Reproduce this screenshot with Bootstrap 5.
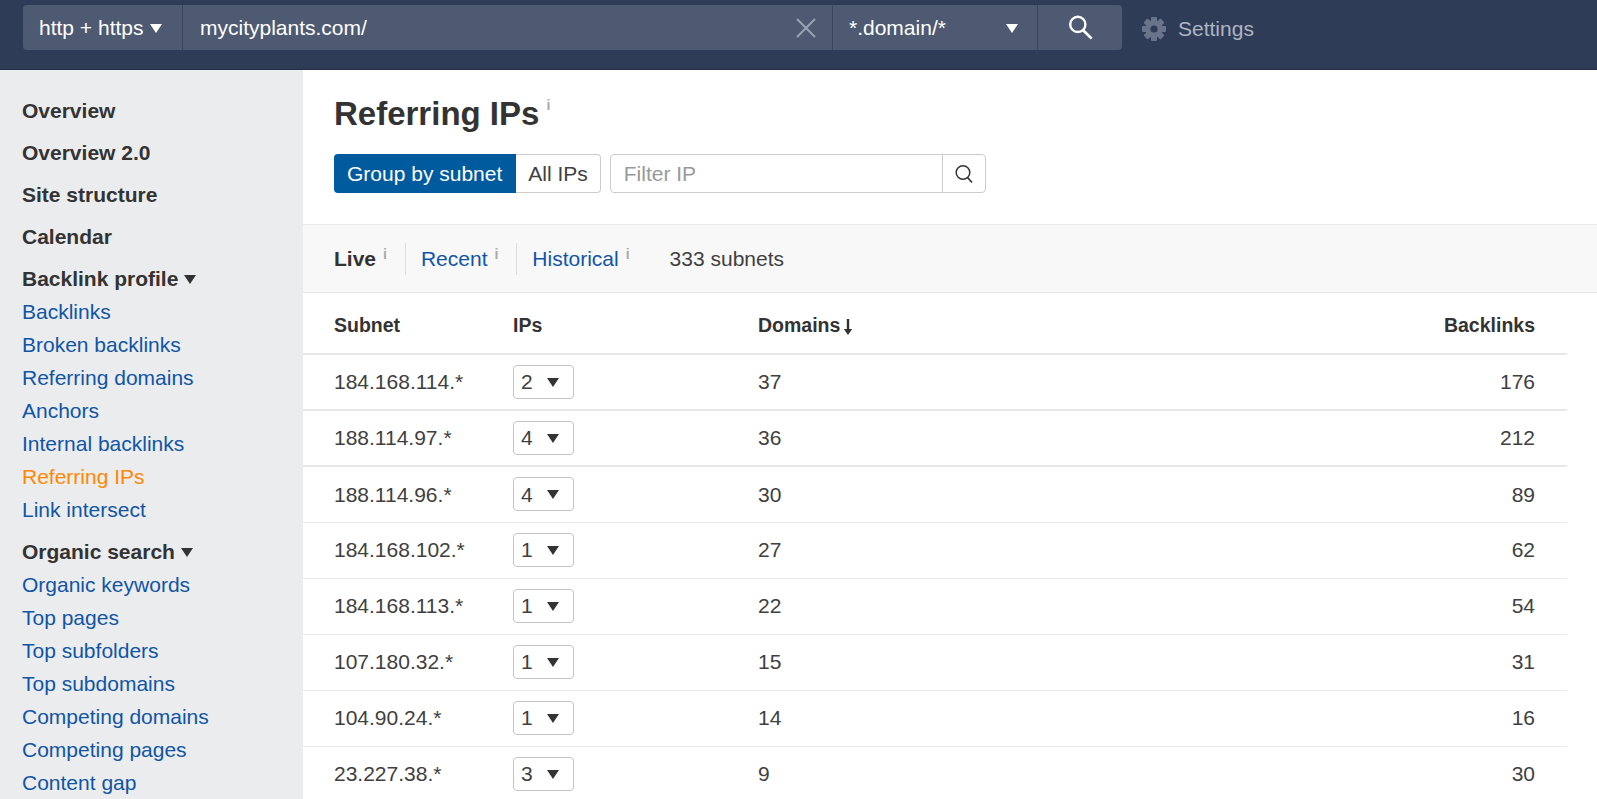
<!DOCTYPE html>
<html lang="en"><head><meta charset="utf-8"><title>Referring IPs</title>
<link rel="stylesheet" href="https://cdn.jsdelivr.net/npm/bootstrap@5.3.0/dist/css/bootstrap.min.css">
<style>
html,body{height:100%;overflow:hidden}
body{font-family:"Liberation Sans",Arial,sans-serif;font-size:21px;color:#404040;background:#fff}
a{text-decoration:none;color:#1155a5}
.topbar{height:70px;background:#2e3c58;border-bottom:1px solid #222e45;padding:5px 0 0 23px}
.searchbar{height:45px;width:1099px;background:#4e5a72;border-radius:4px;color:#fff}
.seg{height:100%;border-right:1px solid #39465f;padding:1px 16px 0;white-space:nowrap}
.seg-proto{width:160px;gap:6px}
.seg-url{flex:1 1 auto;justify-content:space-between;padding-left:17px;padding-right:15px}
.seg-mode{flex:0 0 205px;justify-content:space-between;padding-right:19px}
.seg-go{flex:0 0 84px;border-right:0;justify-content:center;padding:0}
.tri{display:inline-block;width:0;height:0;border-left:6px solid transparent;border-right:6px solid transparent;border-top:9px solid currentColor}
.settings{color:#aeb4c0;margin-left:20px;gap:12px}
.mainwrap{height:calc(100% - 70px)}
.sidenav{width:303px;flex:0 0 303px;background:#ebecee;padding:20px 0 0 22px}
.nav-head{font-weight:700;height:42px;line-height:42px;display:block;color:#333}
.nav-group{height:37px;padding-top:5px;font-weight:700;color:#333;gap:6px}
.nav-item-link{display:block;height:33px;line-height:33px}
.nav-item-link.is-current{color:#f80}
.nav-list{margin-bottom:5px}
.content{flex:1 1 auto;min-width:0}
.head-area{padding:24px 30px 0 31px;height:154px}
.page-title{font-size:33px;font-weight:700;margin:0;line-height:40px;color:#333}
.info-i{font-size:14px;color:#aaa;font-weight:700;position:relative;top:-5px;line-height:1}
.title-i{top:-15px;margin-left:7px}
.tab-i{margin-left:7px}
.filter-row{margin-top:20px;height:39px}
.seg-group{height:39px}
.seg-on{background:#005a9e;color:#fff;border-radius:4px 0 0 4px;padding:0 14px 0 13px;height:39px;line-height:39px}
.seg-off{border:1px solid #ccc;border-left:0;border-radius:0 4px 4px 0;padding:0 12px;height:39px;line-height:37px;background:#fff}
.filter-box{margin-left:9px;width:376px;height:39px;border:1px solid #ccc;border-radius:4px;background:#fff}
.filter-text{flex:1 1 auto;padding-left:13px;color:#999;line-height:37px}
.filter-btn{width:43px;height:100%;border-left:1px solid #ccc}
.tabbar{height:69px;background:#f8f8f8;border-top:1px solid #ebebeb;border-bottom:1px solid #e6e6e6;padding-left:31px}
.tab-sep{width:1px;height:32px;background:#ddd;margin:0 15px 0 18px}
.tab-live{font-weight:700;color:#333}
.tab-count{margin-left:40px}
.ip-table{width:1264px;table-layout:fixed;margin:0;--bs-table-color:#404040;--bs-table-bg:transparent}
.ip-table th,.ip-table td{height:56px;padding:0;vertical-align:middle;border-bottom:1px solid #ebebeb;font-size:21px}
.ip-table th{height:61px;font-weight:700;font-size:19.5px;color:#333;padding-top:6px;border-bottom:2px solid #e8e8e8}
.ip-table tr.strong td{border-bottom:2px solid #e8e8e8}
.col-a{width:210px;padding-left:31px!important}
.col-b{width:245px}
.col-d{text-align:right;padding-right:32px!important;width:300px}
.ip-pick{width:61px;height:34px;border:1px solid #c4c4c4;border-radius:4px;padding:0 8px 0 7px;gap:14px;background:#fff}
.ip-pick .tri{color:#333}
.sort-arrow{margin-left:-3px}
</style></head>
<body>
<header class="topbar d-flex align-items-start">
  <div class="searchbar d-flex align-items-center">
    <div class="seg seg-proto d-flex align-items-center">http + https <span class="tri"></span></div>
    <div class="seg seg-url d-flex align-items-center">mycityplants.com/
      <svg width="22" height="22" viewBox="0 0 22 22" aria-hidden="true"><path d="M2 2 20 20M20 2 2 20" stroke="#9aa1af" stroke-width="2" fill="none"/></svg></div>
    <div class="seg seg-mode d-flex align-items-center">*.domain/* <span class="tri"></span></div>
    <div class="seg seg-go d-flex align-items-center">
      <svg width="25" height="25" viewBox="0 0 28 28" aria-hidden="true"><circle cx="11" cy="10.5" r="8.5" stroke="#fff" stroke-width="2.7" fill="none"/><path d="M17 17 26.5 26.5" stroke="#fff" stroke-width="3" fill="none"/></svg></div>
  </div>
  <div class="settings d-flex align-items-center h-75">
    <svg width="24" height="24" viewBox="0 0 24 24" aria-hidden="true"><g fill="#69738a"><rect x="9" y="0" width="6" height="24" rx="1"/><rect x="9" y="0" width="6" height="24" rx="1" transform="rotate(45 12 12)"/><rect x="9" y="0" width="6" height="24" rx="1" transform="rotate(90 12 12)"/><rect x="9" y="0" width="6" height="24" rx="1" transform="rotate(135 12 12)"/></g><circle cx="12" cy="12" r="6.2" fill="none" stroke="#69738a" stroke-width="5.4"/><circle cx="12" cy="12" r="3.6" fill="#2e3c58"/></svg>
    Settings</div>
</header>
<div class="mainwrap d-flex">
  <nav class="sidenav">
    <a class="nav-head" href="#">Overview</a>
    <a class="nav-head" href="#">Overview 2.0</a>
    <a class="nav-head" href="#">Site structure</a>
    <a class="nav-head" href="#">Calendar</a>
    <div class="nav-group d-flex align-items-center">Backlink profile <span class="tri"></span></div>
    <div class="nav-list">
      <a class="nav-item-link" href="#">Backlinks</a>
      <a class="nav-item-link" href="#">Broken backlinks</a>
      <a class="nav-item-link" href="#">Referring domains</a>
      <a class="nav-item-link" href="#">Anchors</a>
      <a class="nav-item-link" href="#">Internal backlinks</a>
      <a class="nav-item-link is-current" href="#">Referring IPs</a>
      <a class="nav-item-link" href="#">Link intersect</a>
    </div>
    <div class="nav-group d-flex align-items-center">Organic search <span class="tri"></span></div>
    <div class="nav-list">
      <a class="nav-item-link" href="#">Organic keywords</a>
      <a class="nav-item-link" href="#">Top pages</a>
      <a class="nav-item-link" href="#">Top subfolders</a>
      <a class="nav-item-link" href="#">Top subdomains</a>
      <a class="nav-item-link" href="#">Competing domains</a>
      <a class="nav-item-link" href="#">Competing pages</a>
      <a class="nav-item-link" href="#">Content gap</a>
    </div>
  </nav>
  <main class="content">
    <div class="head-area">
      <h1 class="page-title">Referring IPs<span class="info-i title-i">i</span></h1>
      <div class="filter-row d-flex">
        <div class="seg-group d-flex"><span class="seg-on">Group by subnet</span><span class="seg-off">All IPs</span></div>
        <div class="filter-box d-flex align-items-center">
          <div class="filter-text">Filter IP</div>
          <div class="filter-btn d-flex align-items-center justify-content-center">
            <svg width="20" height="20" viewBox="0 0 20 20" aria-hidden="true"><circle cx="9" cy="8.5" r="6.8" stroke="#333" stroke-width="1.5" fill="none"/><path d="M13.5 13.5 18 18.5" stroke="#333" stroke-width="1.7" fill="none"/></svg>
          </div>
        </div>
      </div>
    </div>
    <div class="tabbar d-flex align-items-center">
      <span class="tab-live">Live</span><span class="info-i tab-i">i</span>
      <span class="tab-sep"></span>
      <a href="#">Recent</a><span class="info-i tab-i">i</span>
      <span class="tab-sep"></span>
      <a href="#">Historical</a><span class="info-i tab-i">i</span>
      <span class="tab-count">333 subnets</span>
    </div>
    <table class="table ip-table">
      <thead><tr><th class="col-a">Subnet</th><th class="col-b">IPs</th><th>Domains <svg class="sort-arrow" width="10" height="16" viewBox="0 0 10 16" aria-hidden="true"><path d="M5 0v13" stroke="#333" stroke-width="2.4"/><path d="M.8 10h8.4L5 16z" fill="#333"/></svg></th><th class="col-d">Backlinks</th></tr></thead>
      <tbody>
        <tr class="strong"><td class="col-a">184.168.114.*</td><td><div class="ip-pick d-flex align-items-center">2 <span class="tri"></span></div></td><td>37</td><td class="col-d">176</td></tr>
        <tr class="strong"><td class="col-a">188.114.97.*</td><td><div class="ip-pick d-flex align-items-center">4 <span class="tri"></span></div></td><td>36</td><td class="col-d">212</td></tr>
        <tr><td class="col-a">188.114.96.*</td><td><div class="ip-pick d-flex align-items-center">4 <span class="tri"></span></div></td><td>30</td><td class="col-d">89</td></tr>
        <tr><td class="col-a">184.168.102.*</td><td><div class="ip-pick d-flex align-items-center">1 <span class="tri"></span></div></td><td>27</td><td class="col-d">62</td></tr>
        <tr><td class="col-a">184.168.113.*</td><td><div class="ip-pick d-flex align-items-center">1 <span class="tri"></span></div></td><td>22</td><td class="col-d">54</td></tr>
        <tr><td class="col-a">107.180.32.*</td><td><div class="ip-pick d-flex align-items-center">1 <span class="tri"></span></div></td><td>15</td><td class="col-d">31</td></tr>
        <tr><td class="col-a">104.90.24.*</td><td><div class="ip-pick d-flex align-items-center">1 <span class="tri"></span></div></td><td>14</td><td class="col-d">16</td></tr>
        <tr><td class="col-a">23.227.38.*</td><td><div class="ip-pick d-flex align-items-center">3 <span class="tri"></span></div></td><td>9</td><td class="col-d">30</td></tr>
      </tbody>
    </table>
  </main>
</div>
<script src="https://cdn.jsdelivr.net/npm/bootstrap@5.3.0/dist/js/bootstrap.bundle.min.js"></script>
</body></html>
